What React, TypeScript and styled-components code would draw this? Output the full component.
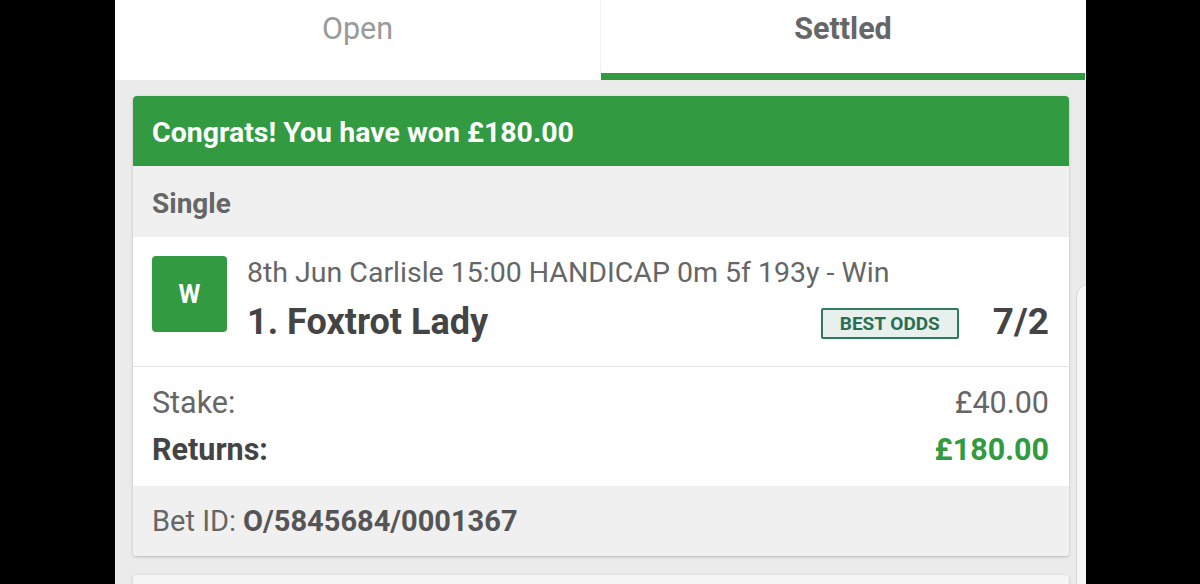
import { FC } from "react";
import styled, { createGlobalStyle } from "styled-components";

const GlobalStyle = createGlobalStyle`
	html, body {
		margin: 0;
		padding: 0;
		background: #000;
		font-family: Roboto, "Liberation Sans", Arial, sans-serif;
	}
`;

const GREEN = "#329a41";

interface Bet {
	amountWon: string;
	type: string;
	result: string;
	event: string;
	selection: string;
	odds: string;
	stake: string;
	returns: string;
	betId: string;
}

const bet: Bet = {
	amountWon: "£180.00",
	type: "Single",
	result: "W",
	event: "8th Jun Carlisle 15:00 HANDICAP 0m 5f 193y - Win",
	selection: "1. Foxtrot Lady",
	odds: "7/2",
	stake: "£40.00",
	returns: "£180.00",
	betId: "O/5845684/0001367",
};

const App: FC = () => {
	return (
		<>
			<GlobalStyle />
			<Screen>
				<Tabs>
					<Tab>Open</Tab>
					<Tab active>Settled</Tab>
				</Tabs>
				<List>
					<Card>
						<WinBanner>Congrats! You have won {bet.amountWon}</WinBanner>
						<BetType>{bet.type}</BetType>
						<Selection>
							<ResultBadge>{bet.result}</ResultBadge>
							<SelectionInfo>
								<EventLine>{bet.event}</EventLine>
								<NameRow>
									<SelectionName>{bet.selection}</SelectionName>
									<BestOdds>BEST ODDS</BestOdds>
									<Odds>{bet.odds}</Odds>
								</NameRow>
							</SelectionInfo>
						</Selection>
						<Totals>
							<TotalRow>
								<span>Stake:</span>
								<span>{bet.stake}</span>
							</TotalRow>
							<TotalRow strong>
								<span>Returns:</span>
								<Returns>{bet.returns}</Returns>
							</TotalRow>
						</Totals>
						<BetIdBar>
							Bet ID: <b>{bet.betId}</b>
						</BetIdBar>
					</Card>
					<NextCard />
				</List>
				<SideTab />
			</Screen>
		</>
	);
};

export default App;

const Screen = styled.div`
	position: relative;
	margin-left: 115px;
	width: 971px;
	height: 584px;
	overflow: hidden;
	background: #ebebeb;
`;

const Tabs = styled.div`
	display: grid;
	grid-template-columns: 486px 484px;
	background: #fff;
	height: 80px;
`;

const Tab = styled.div<{ active?: boolean }>`
	box-sizing: border-box;
	height: 80px;
	padding-top: 14px;
	text-align: center;
	font-size: 30.5px;
	line-height: 1;
	font-weight: ${({ active }) => (active ? 700 : 400)};
	color: ${({ active }) => (active ? "#666" : "#9a9a9a")};
	border-bottom: 7px solid ${({ active }) => (active ? GREEN : "#fff")};
	border-right: ${({ active }) => (active ? "none" : "1px solid #f1f1f1")};
	margin-bottom: ${({ active }) => (active ? "1px" : "0")};
`;

const List = styled.div`
	display: flex;
	flex-direction: column;
	gap: 19px;
	padding: 16px 17px 0 18px;
`;

const Card = styled.div`
	border-radius: 4px;
	overflow: hidden;
	background: #fff;
	box-shadow: 0 1px 3px rgba(0, 0, 0, 0.22);
`;

const NextCard = styled(Card)`
	height: 60px;
	background: #f5f5f5;
`;

const WinBanner = styled.div`
	box-sizing: border-box;
	height: 70px;
	display: flex;
	align-items: center;
	padding: 5px 19px 0;
	background: ${GREEN};
	color: #fff;
	font-size: 28.5px;
	line-height: 1;
	font-weight: 700;
`;

const BetType = styled.div`
	box-sizing: border-box;
	height: 71px;
	display: flex;
	align-items: center;
	padding: 4px 19px 0;
	background: #f0f0f0;
	color: #666;
	font-size: 28px;
	line-height: 1;
	font-weight: 700;
`;

const Selection = styled.div`
	box-sizing: border-box;
	height: 130px;
	display: flex;
	gap: 20px;
	padding: 19px 20px 0 19px;
	border-bottom: 1px solid #e2e2e2;
`;

const ResultBadge = styled.div`
	flex: 0 0 75px;
	height: 76px;
	display: flex;
	align-items: center;
	justify-content: center;
	border-radius: 4px;
	background: ${GREEN};
	color: #fff;
	font-size: 25px;
	font-weight: 700;
`;

const SelectionInfo = styled.div`
	flex: 1;
	display: flex;
	flex-direction: column;
	padding-top: 2px;
`;

const EventLine = styled.div`
	font-size: 28.5px;
	line-height: 30px;
	color: #666;
	white-space: nowrap;
`;

const NameRow = styled.div`
	display: flex;
	align-items: center;
	height: 40px;
	margin-top: 14px;
`;

const SelectionName = styled.div`
	flex: 1;
	font-size: 36px;
	line-height: 40px;
	font-weight: 700;
	color: #444;
	white-space: nowrap;
`;

const BestOdds = styled.div`
	box-sizing: border-box;
	width: 138px;
	height: 31px;
	margin-top: 2px;
	display: flex;
	align-items: center;
	justify-content: center;
	border: 2px solid #2f7b5b;
	border-radius: 2px;
	background: #e7f0ec;
	color: #2b6e51;
	font-size: 19px;
	font-weight: 700;
`;

const Odds = styled.div`
	margin-left: 34px;
	font-size: 37px;
	line-height: 40px;
	font-weight: 700;
	color: #444;
`;

const Totals = styled.div`
	display: flex;
	flex-direction: column;
	gap: 11px;
	padding: 18px 20px 18px 19px;
`;

const TotalRow = styled.div<{ strong?: boolean }>`
	display: flex;
	justify-content: space-between;
	font-size: 30.5px;
	line-height: 36px;
	font-weight: ${({ strong }) => (strong ? 700 : 400)};
	color: ${({ strong }) => (strong ? "#444" : "#666")};
`;

const Returns = styled.span`
	color: ${GREEN};
`;

const BetIdBar = styled.div`
	box-sizing: border-box;
	height: 70px;
	display: flex;
	align-items: center;
	gap: 7px;
	padding: 0 19px;
	background: #f0f0f0;
	color: #666;
	font-size: 29px;
	line-height: 1;

	b {
		color: #555;
		font-weight: 700;
	}
`;

const SideTab = styled.div`
	position: absolute;
	left: 961px;
	top: 283px;
	width: 40px;
	height: 400px;
	box-sizing: border-box;
	border: 1px solid #d8d8d8;
	border-radius: 14px 0 0 0;
	background: #f6f6f6;
`;
